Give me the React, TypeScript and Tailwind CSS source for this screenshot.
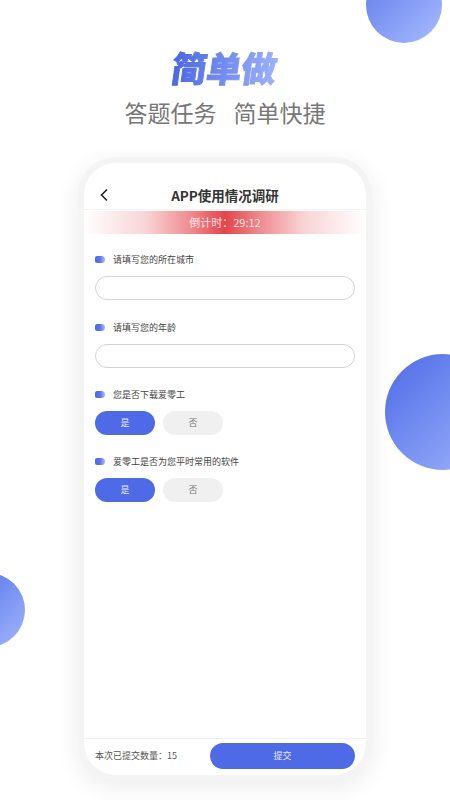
import React from "react";

const FONT = "font-['Noto_Sans_CJK_SC','Noto_Sans',sans-serif]";

function Question({ label, className = "" }: { label: string; className?: string }) {
  return (
    <div className={`flex h-[16px] items-center ${className}`}>
      <span className="h-[7px] w-[10px] -translate-y-[1px] rounded-l-[3px] rounded-r-[5px] bg-gradient-to-r from-[#4e6ae6] via-[#5a75e8] to-[#aebcf7] blur-[0.4px]" />
      <span className="ml-[8px] text-[9px] leading-[16px] text-[#444]">{label}</span>
    </div>
  );
}

function YesNo({ className = "" }: { className?: string }) {
  return (
    <div className={`flex gap-[8px] ${className}`}>
      <div className="flex h-[24px] w-[60px] items-center justify-center rounded-full bg-[#4e6ae6] text-[9px] text-[#e6eaff]">是</div>
      <div className="flex h-[24px] w-[60px] items-center justify-center rounded-full bg-[#f0f0f0] text-[9px] text-[#777]">否</div>
    </div>
  );
}

export default function App() {
  return (
    <div className={`relative h-[800px] w-[450px] overflow-hidden bg-white ${FONT}`}>
      {/* background circles */}
      <div className="absolute left-[366px] top-[-33px] h-[76px] w-[76px] rounded-full bg-gradient-to-br from-[#5f7ae9] to-[#a9bbff]" />
      <div className="absolute left-[385px] top-[354px] h-[116px] w-[116px] rounded-full bg-gradient-to-br from-[#4e6ae6] to-[#a3b5fb]" />
      <div className="absolute left-[-49px] top-[573px] h-[74px] w-[74px] rounded-full bg-gradient-to-br from-[#4e6ae6] to-[#a3b5fb]" />

      <div className="relative flex flex-col items-center">
        <div className="mt-[46px] h-[42px] -skew-x-[8deg] bg-gradient-to-r from-[#4a66e4] to-[#9db0fb] bg-clip-text text-[35px] font-black leading-[42px] text-transparent [-webkit-text-stroke:1px_transparent]">
          简单做
        </div>
        <div className="mt-[7px] flex h-[34px] gap-[17px] text-[23px] leading-[34px] text-[#777]">
          <span>答题任务</span>
          <span>简单快捷</span>
        </div>

        {/* phone */}
        <div className="mt-[28px] rounded-[38px] bg-[#f4f4f4] p-[6px] shadow-[0_6px_24px_rgba(0,0,0,0.08)]">
          <div className="flex h-[612px] w-[282px] flex-col overflow-hidden rounded-[32px] bg-white">
            <div className="relative flex h-[47px] shrink-0 items-center justify-center border-b border-[#f3f3f3] pt-[17px]">
              <svg className="absolute left-[15px] top-[25px]" width="10" height="14" viewBox="0 0 10 14" fill="none">
                <path d="M8 1.5 2.5 7 8 12.5" stroke="#222" strokeWidth="1.6" />
              </svg>
              <span className="text-[13.5px] font-bold leading-[20px] text-[#333]">APP使用情况调研</span>
            </div>
            <div className="mt-[1px] flex h-[23px] shrink-0 items-center justify-center bg-[linear-gradient(90deg,#ffffff_0%,#f9d4d5_22%,#ee8a8e_38%,#e5434b_50%,#ee8a8e_62%,#f9d4d5_78%,#ffffff_100%)] text-[11px] text-[#fde4e4]">
              倒计时：29:12
            </div>

            <div className="flex flex-1 flex-col px-[11px]">
              <Question label="请填写您的所在城市" className="mt-[18px]" />
              <div className="mt-[8px] h-[24px] rounded-full border border-[#d4d4d4]" />
              <Question label="请填写您的年龄" className="mt-[20px]" />
              <div className="mt-[8px] h-[24px] rounded-full border border-[#d4d4d4]" />
              <Question label="您是否下载爱零工" className="mt-[19px]" />
              <YesNo className="mt-[8px]" />
              <Question label="爱零工是否为您平时常用的软件" className="mt-[19px]" />
              <YesNo className="mt-[8px]" />
            </div>

            <div className="flex h-[37px] shrink-0 items-start justify-between border-t border-[#f0f0f0] px-[11px] pt-[4px]">
              <span className="mt-[4px] text-[9px] leading-[18px] text-[#555]">本次已提交数量：15</span>
              <div className="flex h-[26px] w-[145px] items-center justify-center rounded-full bg-[#4e6ae6] text-[9px] text-[#e6eaff]">提交</div>
            </div>
          </div>
        </div>
      </div>
    </div>
  );
}
